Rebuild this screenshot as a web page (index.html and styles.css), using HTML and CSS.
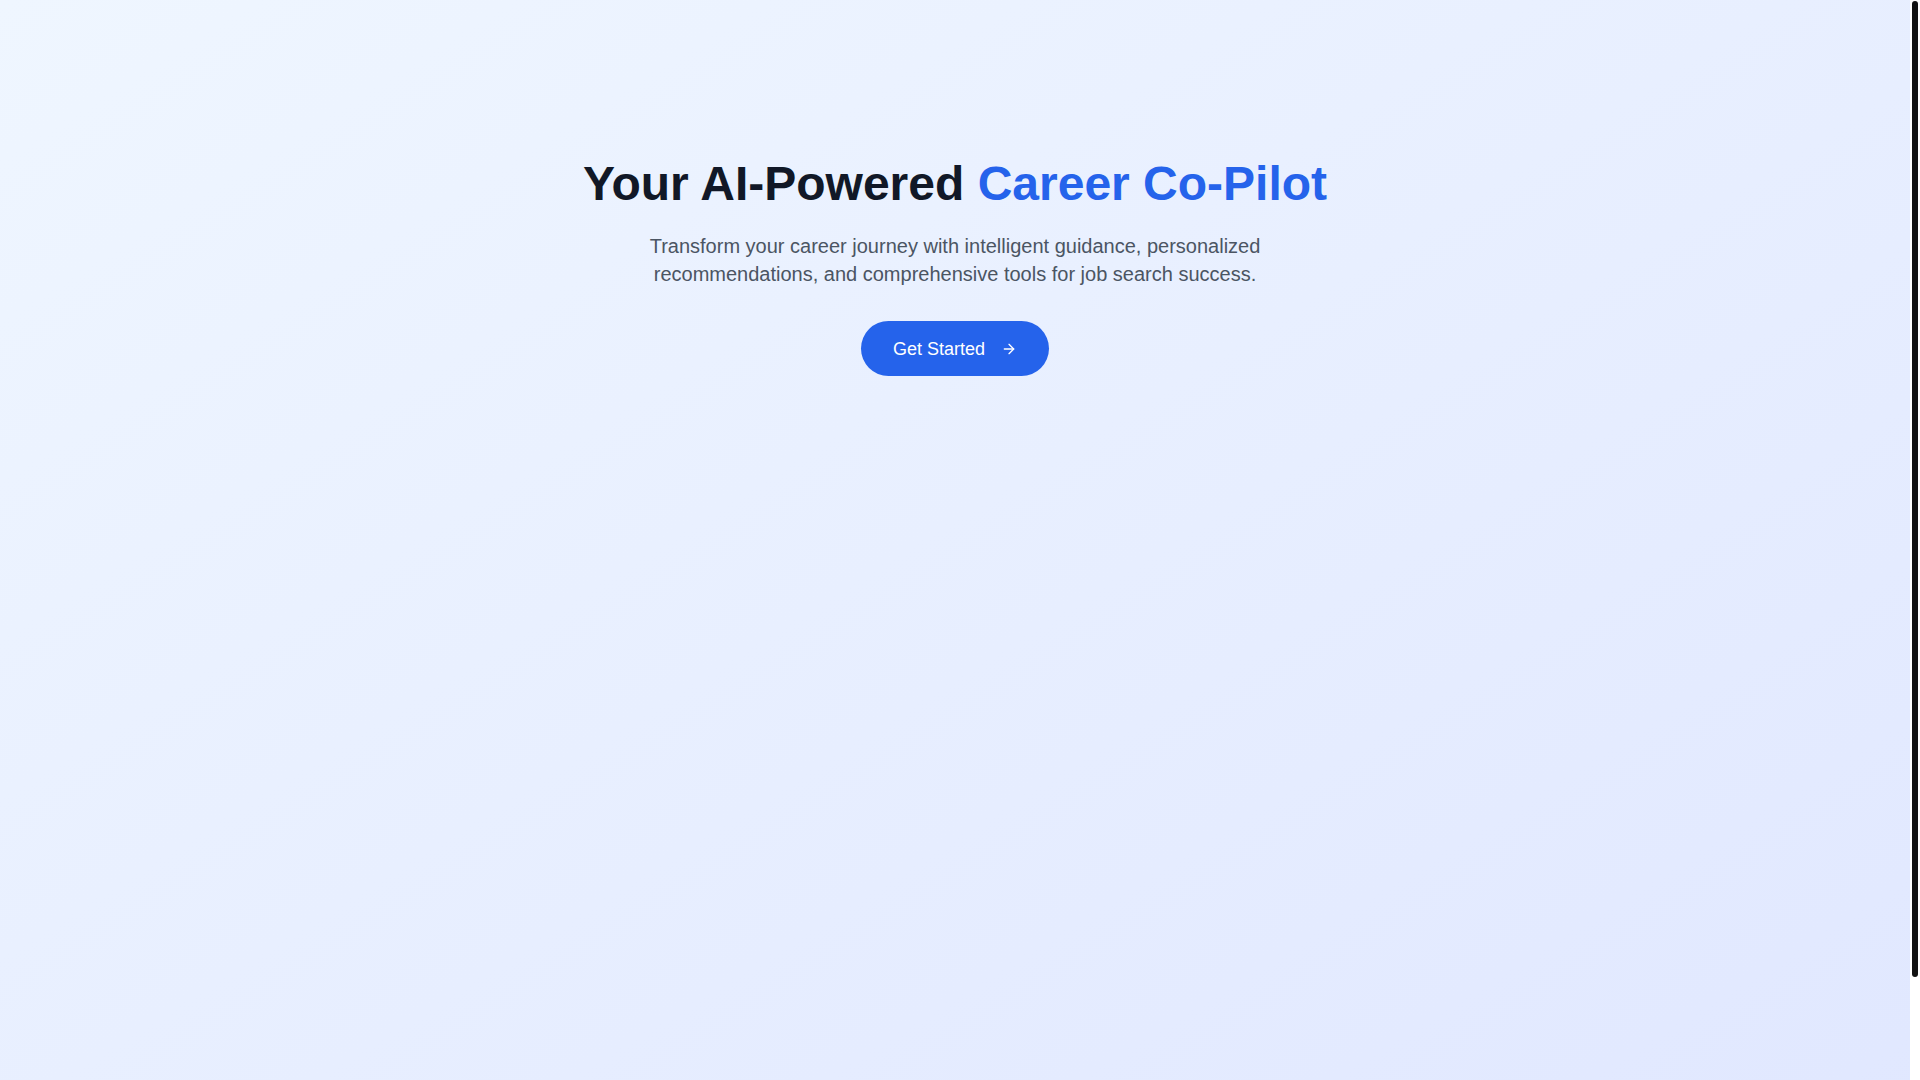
FILE: index.html
```html
<!DOCTYPE html>
<html lang="en">
<head>
<meta charset="utf-8">
<title>Career Co-Pilot</title>
<link rel="stylesheet" href="styles.css">
</head>
<body>
<div class="frame">
  <main class="page">
    <section class="hero">
      <h1 class="title">Your AI-Powered <span class="accent">Career Co-Pilot</span></h1>
      <p class="subtitle">Transform your career journey with intelligent guidance, personalized recommendations, and comprehensive tools for job search success.</p>
      <button class="cta" type="button">
        <span>Get Started</span>
        <svg class="cta-icon" viewBox="0 0 24 24" fill="none" stroke="currentColor" stroke-width="2" stroke-linecap="round" stroke-linejoin="round"><path d="M5 12h14"/><path d="m12 5 7 7-7 7"/></svg>
      </button>
    </section>
  </main>
  <div class="scrollbar" aria-hidden="true">
    <div class="scrollbar-thumb"></div>
  </div>
</div>
</body>
</html>
```

FILE: styles.css
```css
html, body {
  margin: 0;
  padding: 0;
  height: 100%;
  overflow: hidden;
}

body {
  font-family: "Liberation Sans", Arial, sans-serif;
}

.frame {
  display: flex;
  align-items: flex-start;
  height: 100vh;
  overflow: hidden;
}

.page {
  flex: 1;
  min-width: 0;
  height: 1195px;
  box-sizing: border-box;
  background: linear-gradient(to bottom right, #eff6ff, #e0e7ff);
  padding-top: 160px;
}

.scrollbar {
  width: 10px;
  height: 100vh;
  flex: none;
  background: #ffffff;
  box-sizing: border-box;
  padding: 1px 2px 0;
}

.scrollbar-thumb {
  height: 976px;
  background: #111111;
  border-radius: 3px;
}

.hero {
  display: flex;
  flex-direction: column;
  align-items: center;
  text-align: center;
}

.title {
  margin: 0 0 24px;
  font-size: 48px;
  line-height: 48px;
  font-weight: 700;
  color: #111827;
}

.accent {
  color: #2563eb;
}

.subtitle {
  margin: 0 0 33px;
  max-width: 672px;
  font-size: 20px;
  line-height: 28px;
  color: #4b5563;
}

.cta {
  display: inline-flex;
  align-items: center;
  gap: 16px;
  height: 55px;
  padding: 0 32px;
  border: none;
  border-radius: 9999px;
  background: #2563eb;
  color: #ffffff;
  font-family: "Liberation Sans", Arial, sans-serif;
  font-size: 18px;
  line-height: 28px;
  cursor: pointer;
}

.cta-icon {
  width: 16px;
  height: 16px;
}
```
